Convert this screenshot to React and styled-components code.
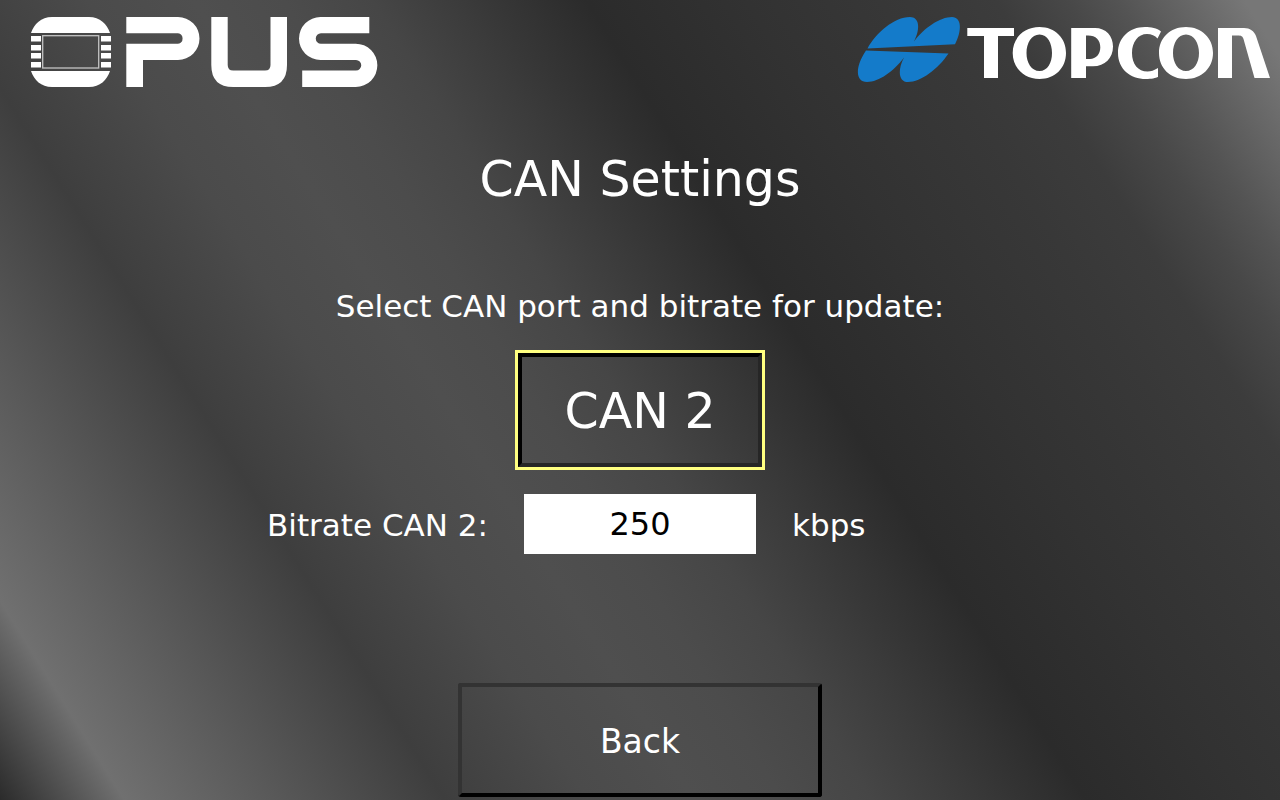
import React, { useState } from 'react';
import styled, { createGlobalStyle } from 'styled-components';

const GlobalStyle = createGlobalStyle`
  *, *::before, *::after { box-sizing: border-box; }
  html, body, #root { height: 100%; }
  body {
    margin: 0;
    font-family: "DejaVu Sans", Verdana, sans-serif;
    color: #fff;
  }
`;

const Screen = styled.div`
  display: flex;
  flex-direction: column;
  align-items: center;
  min-height: 100%;
  padding-bottom: 3px;
  background: linear-gradient(58deg,
    #2b2b2b 0%, #707070 7%, #5a5a5a 15%, #3e3e3e 25%, #4b4b4b 33%, #4f4f4f 39%,
    #4c4c4c 44%, #464646 49%, #3b3b3b 54%, #2b2b2b 61%, #323232 70%, #383838 79%,
    #3c3c3c 84%, #484848 88%, #545454 91%, #777 98%, #777 100%);
`;

const Header = styled.header`
  display: flex;
  justify-content: space-between;
  align-self: stretch;
  padding: 16px 10px 0 30px;
`;

const OpusLogo = styled.svg`
  width: 348px;
  height: 72px;
`;

const TopconLogo = styled.svg`
  width: 413px;
  height: 68px;
`;

const Main = styled.main`
  display: flex;
  flex-direction: column;
  align-items: center;
  align-self: stretch;
`;

const Title = styled.h1`
  margin: 62px 0 0;
  font-size: 49px;
  line-height: 60px;
  font-weight: 400;
`;

const Prompt = styled.p`
  margin: 76px 0 0;
  font-size: 31px;
  line-height: 40px;
`;

const PanelButton = styled.button`
  width: ${(p) => p.$width}px;
  height: ${(p) => p.$height}px;
  padding: 2px 0 0;
  border: 4px solid;
  border-color: ${(p) => (p.$pressed ? '#000 #262626 #262626 #000' : '#333 #000 #000 #333')};
  border-radius: ${(p) => (p.$pressed ? 0 : 3)}px;
  outline: ${(p) => (p.$pressed ? '3px solid #ffff80' : 'none')};
  background: transparent;
  color: inherit;
  font-family: inherit;
  font-size: ${(p) => p.$font}px;
`;

const Ports = styled.div`
  display: flex;
  margin-top: 27px;
`;

const BitrateRow = styled.div`
  display: grid;
  grid-template-columns: 1fr 232px 1fr;
  column-gap: 36px;
  align-items: center;
  align-self: stretch;
  margin-top: 27px;
  font-size: 31px;
`;

const BitrateLabel = styled.label`
  justify-self: end;
  padding-top: 2px;
`;

const Unit = styled.span`
  padding-top: 2px;
`;

const BitrateInput = styled.input`
  width: 100%;
  height: 60px;
  padding: 0;
  border: 0;
  background: #fff;
  color: #000;
  font-family: inherit;
  font-size: 32px;
  text-align: center;
`;

const Footer = styled.footer`
  margin-top: auto;
`;

function Opus() {
  return (
    <OpusLogo viewBox="30 16 348 72" role="img" aria-label="OPUS" fill="#fff">
      <path d="M31 33C34 24 41 17 52 17H89C100 17 107 24 110 33Z" />
      <path d="M31 71H110C107 80 100 87 89 87H52C41 87 34 80 31 71Z" />
      {[36, 45, 53, 62].map((y) => (
        <path key={y} d={`M31 ${y}h10v5.500H31ZM101 ${y}h10v5.500H101Z`} />
      ))}
      <rect x="42.700" y="35.700" width="56" height="32.300" fill="none" stroke="#c4c4c4" strokeWidth="1.300" />
      <path d="M126.300 17H178A21.500 21.500 0 0 1 178 60H143V87H126.300V43.700H178A5.300 5.300 0 0 0 178 33.200H126.300Z" />
      <path d="M211.300 17H227.700V65Q227.700 70.500 233.200 70.500H265Q270.500 70.500 270.500 65V17H287V65Q287 87 265 87H233.300Q211.300 87 211.300 65Z" />
      <path d="M369.300 17H320.500A21.500 21.500 0 0 0 320.500 60H356A5.250 5.250 0 0 1 356 70.500H302.200V87H355.700A21.650 21.650 0 0 0 355.700 43.700H321A5.250 5.250 0 0 1 321 33.200H369.300Z" />
    </OpusLogo>
  );
}

function Topcon() {
  return (
    <TopconLogo viewBox="857 16 413 68" role="img" aria-label="TOPCON">
      <g fill="#147bca">
        <path d="M867.500 48.500C876 33 894 17 910 17C919 17 921 28 914 41.500C924 28 940 17 952 17C962 17 962 31 955 44.300Z" />
        <path d="M866 50.600L948.500 53.500C938 69 921 82 908 82C899 82 897 71 904 57.500C894 71 879 82 867 82C855 82 855 67 866 50.600Z" />
      </g>
      <g fill="#fff" fillRule="evenodd">
        <path d="M967.300 28H1014V36H998V78H984V36H967.300Z" />
        <path d="M1039.500 27C1055 27 1066 38 1066 53C1066 68 1055 79 1039.500 79C1024 79 1012.700 68 1012.700 53C1012.700 38 1024 27 1039.500 27ZM1039.500 34.500C1031.500 34.500 1026.500 43 1026.500 53C1026.500 63 1031.500 71 1039.500 71C1047.500 71 1052 63 1052 53C1052 43 1047.500 34.500 1039.500 34.500Z" />
        <path d="M1071.200 28H1095C1106 28 1113 36 1113 46.500C1113 58 1105 66.300 1093 66.300H1086V78H1071.200ZM1086 35.500V59H1090C1096 59 1100.300 54 1100.300 47.500C1100.300 40 1096 35.500 1088 35.500Z" />
        <path d="M1161 31.500C1157 28 1151 27 1145 27C1129 27 1118 38 1118 53C1118 69 1130 79 1146 79C1151 79 1156 78 1158 77V68C1154 70.500 1151 71.500 1147.500 71.500C1138 71.500 1132 64 1132 53C1132 42 1138 34 1147 34C1151.500 34 1155 35.500 1157.500 38.500Z" />
        <path d="M1186 27C1201.500 27 1213 38 1213 53C1213 68 1201.500 79 1186 79C1170 79 1159 68 1159 53C1159 38 1170 27 1186 27ZM1186 34.500C1178 34.500 1173 43 1173 53C1173 63 1178 71 1186 71C1194 71 1199 63 1199 53C1199 43 1194 34.500 1186 34.500Z" />
        <path d="M1218 28H1244C1250 28 1254 31 1256 36L1270 78H1254.500L1243.500 39C1242.500 36 1241 35.500 1238 35.500H1232V78H1218Z" />
      </g>
    </TopconLogo>
  );
}

export default function App() {
  const [bitrate, setBitrate] = useState('250');
  return (
    <>
      <GlobalStyle />
      <Screen>
        <Header>
          <Opus />
          <Topcon />
        </Header>
        <Main>
          <Title>CAN Settings</Title>
          <Prompt>Select CAN port and bitrate for update:</Prompt>
          <Ports>
            <PanelButton type="button" aria-pressed="true" $pressed $width={244} $height={114} $font={49}>
              CAN 2
            </PanelButton>
          </Ports>
          <BitrateRow>
            <BitrateLabel htmlFor="bitrate">Bitrate CAN 2:</BitrateLabel>
            <BitrateInput id="bitrate" value={bitrate} onChange={(e) => setBitrate(e.target.value)} />
            <Unit>kbps</Unit>
          </BitrateRow>
        </Main>
        <Footer>
          <PanelButton type="button" $width={364} $height={114} $font={33}>
            Back
          </PanelButton>
        </Footer>
      </Screen>
    </>
  );
}
